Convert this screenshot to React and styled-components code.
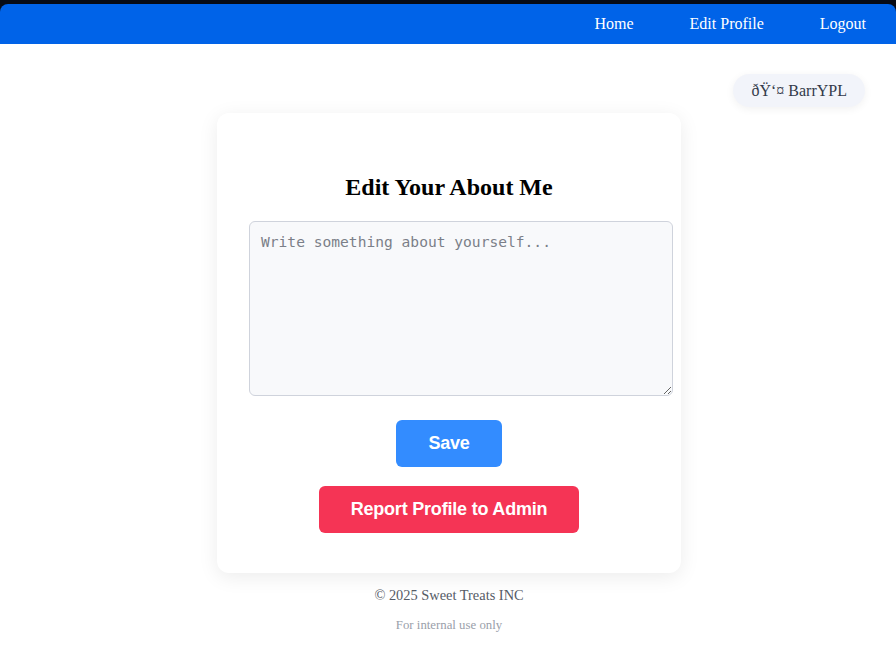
import React from "react";
import styled, { createGlobalStyle } from "styled-components";

const GlobalStyle = createGlobalStyle`
  body {
    margin: 0;
    background: #ffffff;
    font-family: "Liberation Serif", "Times New Roman", serif;
  }
`;

const Header = styled.header`
  background: #060b16;
  padding-top: 4px;
`;

const Nav = styled.nav`
  height: 40px;
  display: flex;
  justify-content: flex-end;
  align-items: center;
  gap: 56px;
  padding-right: 30px;
  background: #0063e8;
  border-radius: 8px 8px 0 0;
`;

const NavLink = styled.a`
  color: #ffffff;
  font-size: 16px;
  font-weight: 500;
  text-decoration: none;
  cursor: pointer;
`;

const UserRow = styled.div`
  display: flex;
  justify-content: flex-end;
  padding: 30px 31px 0;
`;

const UserBadge = styled.div`
  padding: 8px 18px;
  font-size: 16px;
  line-height: 17px;
  color: #333a4a;
  background: #f2f4fa;
  border-radius: 18px;
  box-shadow: 0 2px 8px rgba(0, 0, 0, 0.06);
`;

const Card = styled.section`
  width: 400px;
  margin: 6px auto 0;
  padding: 40px 32px;
  background: #ffffff;
  border-radius: 12px;
  box-shadow: 0 4px 20px rgba(0, 0, 0, 0.08);
  display: flex;
  flex-direction: column;
  align-items: center;
  transform: translateX(1px);
`;

const Title = styled.h2`
  margin: 21px 0 20px;
  font-size: 24px;
  font-weight: 700;
  color: #000000;
`;

const AboutInput = styled.textarea`
  display: block;
  align-self: flex-start;
  box-sizing: content-box;
  width: 100%;
  height: 151px;
  padding: 11px;
  margin: 0;
  border: 1px solid #cfd3dc;
  border-radius: 6px;
  background: #f8f9fb;
  font-family: "DejaVu Sans Mono", monospace;
  font-size: 14.6px;
  color: #333;

  &::placeholder {
    color: #7b7f88;
  }
`;

const Button = styled.button`
  margin-top: ${(p) => p.$gap}px;
  padding: 13px 32px;
  border: none;
  border-radius: 6px;
  background: ${(p) => p.$bg};
  color: #ffffff;
  font-family: "Liberation Sans", Arial, sans-serif;
  font-size: 18px;
  font-weight: 700;
  line-height: 21px;
  letter-spacing: -0.2px;
  cursor: pointer;
`;

const Footer = styled.footer`
  margin-top: 14px;
  text-align: center;
  transform: translateX(1px);
`;

const Copyright = styled.p`
  margin: 0;
  font-size: 14.4px;
  line-height: 16px;
  color: #555b66;
`;

const Note = styled.p`
  margin: 15px 0 0;
  font-size: 12.8px;
  line-height: 15px;
  color: #9aa0aa;
`;

export default function App() {
  return (
    <>
      <GlobalStyle />
      <Header>
        <Nav>
          <NavLink>Home</NavLink>
          <NavLink>Edit Profile</NavLink>
          <NavLink>Logout</NavLink>
        </Nav>
      </Header>
      <UserRow>
        <UserBadge>{"\u00F0\u0178\u2018\u00A4 BarrYPL"}</UserBadge>
      </UserRow>
      <Card>
        <Title>Edit Your About Me</Title>
        <AboutInput placeholder="Write something about yourself..." />
        <Button $bg="#338cff" $gap={24}>Save</Button>
        <Button $bg="#f53455" $gap={19}>Report Profile to Admin</Button>
      </Card>
      <Footer>
        <Copyright>© 2025 Sweet Treats INC</Copyright>
        <Note>For internal use only</Note>
      </Footer>
    </>
  );
}
